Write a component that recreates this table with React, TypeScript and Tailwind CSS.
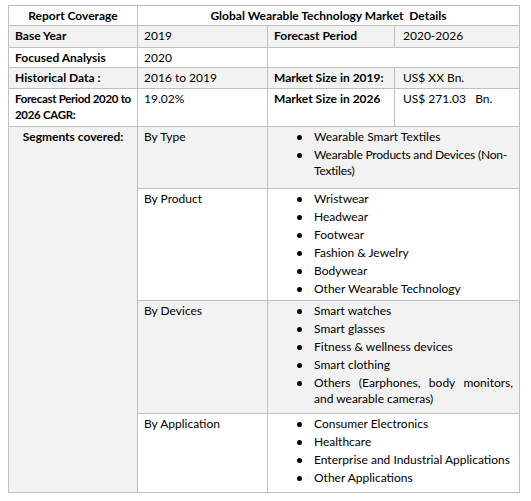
import React from 'react';

const cell = 'border border-[#bfbfbf] align-top px-[6px] pt-[2px] leading-[16px]';
const gray = 'bg-[#f2f2f2]';

const Bullets = ({ items, justifyLast }: { items: React.ReactNode[]; justifyLast?: boolean }) => (
  <ul className="pl-[23px]">
    {items.map((item, i) => (
      <li key={i} className="flex mb-[2px]">
        <span className="w-[17px] flex-shrink-0 pt-[6px]">
          <span className="block w-[5px] h-[5px] rounded-full bg-black" />
        </span>
        <span className={justifyLast && i === items.length - 1 ? 'text-justify' : ''}>{item}</span>
      </li>
    ))}
  </ul>
);

export default function App() {
  return (
    <div className="w-[531px] h-[501px] bg-white pt-[5px] pl-[8px] text-black text-[12px]" style={{ fontFamily: 'Lato, "Open Sans", sans-serif' }}>
      <table className="table-fixed border-collapse w-[511px]">
        <colgroup>
          <col className="w-[129px]" />
          <col className="w-[130px]" />
          <col className="w-[127px]" />
          <col className="w-[125px]" />
        </colgroup>
        <tbody>
          <tr className="h-[20px]">
            <td className={`${cell} text-center font-bold`}>Report Coverage</td>
            <td colSpan={3} className={`${cell} text-center font-bold`}>
              Global Wearable Technology Market&nbsp; Details
            </td>
          </tr>
          <tr className={`h-[22px] ${gray}`}>
            <td className={`${cell} font-bold`}>Base Year</td>
            <td className={cell}>2019</td>
            <td className={`${cell} font-bold`}>Forecast Period</td>
            <td className={`${cell} pl-[8px]`}>2020-2026</td>
          </tr>
          <tr className="h-[20px]">
            <td className={`${cell} font-bold`}>Focused Analysis</td>
            <td className={cell}>2020</td>
            <td colSpan={2} className={cell}></td>
          </tr>
          <tr className={`h-[21px] ${gray}`}>
            <td className={`${cell} font-bold`}>Historical Data :</td>
            <td className={cell}>2016 to 2019</td>
            <td className={`${cell} font-bold whitespace-nowrap`}>Market Size in 2019:</td>
            <td className={`${cell} pl-[8px]`}>US$ XX Bn.</td>
          </tr>
          <tr className="h-[38px]">
            <td className={`${cell} font-bold whitespace-nowrap pr-0 text-[11.5px] tracking-[-0.3px]`}>
              Forecast Period 2020 to
              <br />
              2026 CAGR:
            </td>
            <td className={cell}>19.02%</td>
            <td className={`${cell} font-bold`}>Market Size in 2026</td>
            <td className={`${cell} pl-[8px]`}>US$ 271.03&nbsp;&nbsp; Bn.</td>
          </tr>
          <tr className={`h-[62px] ${gray}`}>
            <td rowSpan={4} className={`${cell} ${gray} text-center font-bold`}>Segments covered:</td>
            <td className={cell}>By Type</td>
            <td colSpan={2} className={cell}>
              <Bullets
                items={[
                  'Wearable Smart Textiles',
                  <span className="whitespace-nowrap tracking-[-0.2px]">
                    Wearable Products and Devices (Non-
                    <br />
                    Textiles)
                  </span>,
                ]}
              />
            </td>
          </tr>
          <tr className="h-[112px]">
            <td className={`${cell} bg-white`}>By Product</td>
            <td colSpan={2} className={`${cell} bg-white`}>
              <Bullets
                items={['Wristwear', 'Headwear', 'Footwear', 'Fashion & Jewelry', 'Bodywear', 'Other Wearable Technology']}
              />
            </td>
          </tr>
          <tr className={`h-[113px] ${gray}`}>
            <td className={cell}>By Devices</td>
            <td colSpan={2} className={cell}>
              <Bullets
                justifyLast
                items={[
                  'Smart watches',
                  'Smart glasses',
                  'Fitness & wellness devices',
                  'Smart clothing',
                  'Others (Earphones, body monitors, and wearable cameras)',
                ]}
              />
            </td>
          </tr>
          <tr className="h-[79px]">
            <td className={`${cell} bg-white`}>By Application</td>
            <td colSpan={2} className={`${cell} bg-white`}>
              <Bullets
                items={['Consumer Electronics', 'Healthcare', 'Enterprise and Industrial Applications', 'Other Applications']}
              />
            </td>
          </tr>
        </tbody>
      </table>
    </div>
  );
}
